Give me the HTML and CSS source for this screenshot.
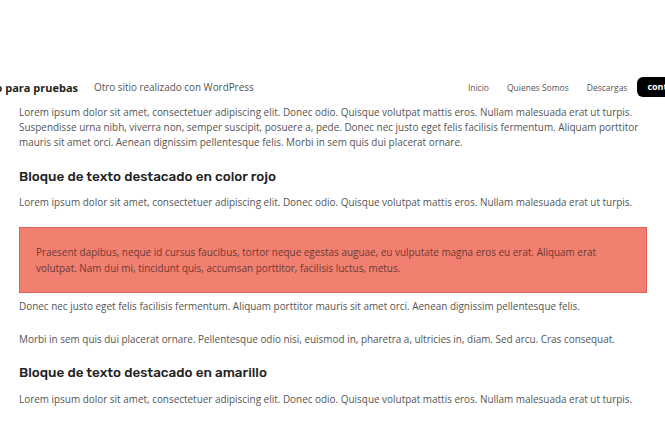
FILE: index.html
```html
<!DOCTYPE html>
<html lang="es">
<head>
<meta charset="utf-8">
<title>Sitio para pruebas</title>
<link rel="stylesheet" href="styles.css">
</head>
<body>
<header class="site-header">
  <div class="branding">
    <span class="site-title">Sitio para pruebas</span>
    <span class="site-tagline">Otro sitio realizado con WordPress</span>
  </div>
  <nav class="menu">
    <a class="menu-item">Inicio</a>
    <a class="menu-item">Quienes Somos</a>
    <a class="menu-item">Descargas</a>
    <a class="menu-button">contacto</a>
  </nav>
</header>
<main class="content">
  <p>Lorem ipsum dolor sit amet, consectetuer adipiscing elit. Donec odio. Quisque volutpat mattis eros. Nullam malesuada erat ut turpis. Suspendisse urna nibh, viverra non, semper suscipit, posuere a, pede. Donec nec justo eget felis facilisis fermentum. Aliquam porttitor mauris sit amet orci. Aenean dignissim pellentesque felis. Morbi in sem quis dui placerat ornare.</p>
  <h2>Bloque de texto destacado en color rojo</h2>
  <p>Lorem ipsum dolor sit amet, consectetuer adipiscing elit. Donec odio. Quisque volutpat mattis eros. Nullam malesuada erat ut turpis.</p>
  <div class="highlight-red">
    <p>Praesent dapibus, neque id cursus faucibus, tortor neque egestas auguae, eu vulputate magna eros eu erat. Aliquam erat volutpat. Nam dui mi, tincidunt quis, accumsan porttitor, facilisis luctus, metus.</p>
  </div>
  <p>Donec nec justo eget felis facilisis fermentum. Aliquam porttitor mauris sit amet orci. Aenean dignissim pellentesque felis.</p>
  <p>Morbi in sem quis dui placerat ornare. Pellentesque odio nisi, euismod in, pharetra a, ultricies in, diam. Sed arcu. Cras consequat.</p>
  <h2>Bloque de texto destacado en amarillo</h2>
  <p>Lorem ipsum dolor sit amet, consectetuer adipiscing elit. Donec odio. Quisque volutpat mattis eros. Nullam malesuada erat ut turpis.</p>
</main>
</body>
</html>
```

FILE: styles.css
```css
html, body {
  margin: 0;
  padding: 0;
  background: #ffffff;
  overflow: hidden;
}

body {
  font-family: "Open Sans", "Liberation Sans", sans-serif;
  color: #555555;
}

.site-header {
  display: flex;
  align-items: center;
  justify-content: space-between;
  height: 20px;
  margin: 77px -32px 0 -22px;
}

.branding {
  display: flex;
  align-items: center;
  gap: 16px;
}

.site-title {
  font-family: "Open Sans", sans-serif;
  font-weight: 700;
  font-size: 11px;
  color: #222222;
}

.site-tagline {
  font-size: 9.9px;
  color: #555555;
}

.menu {
  display: flex;
  align-items: center;
  gap: 18px;
  font-size: 8.5px;
}

.menu-item {
  color: #555555;
}

.menu-button {
  background: #000000;
  color: #ffffff;
  font-weight: 700;
  font-size: 9px;
  padding: 0 10px;
  height: 20px;
  line-height: 20px;
  border-radius: 6px;
  margin-left: -8px;
}

.content {
  width: 628px;
  margin: 8px 0 0 19px;
  font-size: 9.94px;
  line-height: 15px;
}

.content p {
  margin: 0 0 18px;
}

.content h2 {
  font-family: "Rubik", "Inter", "Roboto", sans-serif;
  font-weight: 500;
  font-size: 13.5px;
  line-height: 15px;
  color: #222222;
  margin: 18.5px 0 11.5px;
}

.highlight-red {
  background: #f28070;
  border: 1px solid #e0625a;
  padding: 16px;
  line-height: 16px;
  color: #6a3a32;
  margin-top: -1.5px;
  margin-bottom: 6px;
}

.highlight-red p {
  margin: 0;
}
```
